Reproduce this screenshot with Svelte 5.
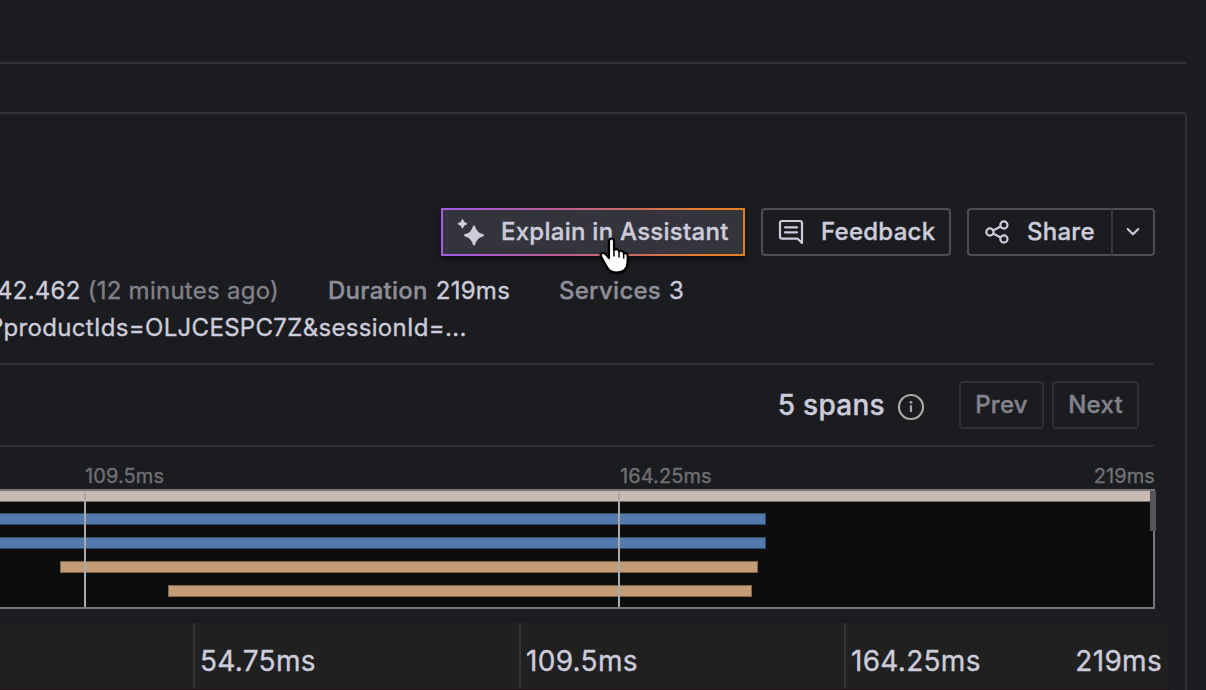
<script>
  const bars = [
    { left: 0, width: 1150, kind: 'root' },
    { left: 0, width: 766, kind: 'blue' },
    { left: 0, width: 765.5, kind: 'blue' },
    { left: 60, width: 698, kind: 'tan' },
    { left: 168, width: 584, kind: 'tan' }
  ];
</script>

<div class="page">
  <header></header>
  <main>
    <div class="actions">
      <button class="btn explain">
        <svg width="28" height="28" viewBox="0 0 28 28" fill="currentColor">
          <path d="M6.5 1Q6.9 1 7.1 1.6Q7.8 4.4 10.6 5.1Q11.2 5.3 11.2 5.8T10.6 6.5Q7.8 7.3 7.1 10Q6.9 10.6 6.5 10.6T5.9 10Q5.2 7.3 2.4 6.5Q1.8 6.3 1.8 5.8T2.4 5.1Q5.2 4.4 5.9 1.6Q6.1 1 6.5 1Z" />
          <path d="M18 7.5Q18.9 7.5 19.2 8.4Q20.8 14.6 26.9 16.1Q27.9 16.4 27.9 17.3T26.9 18.4Q20.8 20 19.2 26.4Q18.9 27.4 18 27.4T16.8 26.4Q15.2 20 9.1 18.4Q8.1 18.1 8.1 17.3T9.1 16.1Q15.2 14.6 16.8 8.4Q17.1 7.5 18 7.5Z" />
        </svg>
        <span>Explain in Assistant</span>
        <svg class="pointer" width="34" height="42" viewBox="0 0 34 42">
          <path d="M13 24V7.5C13 3.5 18 3.5 18 7.5V16C19.5 14.5 22.5 15 23 17.2C25 16.2 27.5 17 27.9 19.2C30 18.7 31.7 20 31.7 22.3V27C31.7 34 28 38.5 20.5 38.5C14.5 38.5 12.3 36 9.7 31L5.2 22.8C3.4 19.3 7.4 17.5 9.6 20.3Z" fill="#fff" stroke="#000" stroke-width="2.2" stroke-linejoin="round" />
          <path d="M18 15V22M23 17V23M27.7 19V24" stroke="#000" stroke-width="1.5" stroke-linecap="round" />
        </svg>
      </button>
      <button class="btn">
        <svg width="28" height="28" viewBox="0 0 28 28" fill="none" stroke="currentColor" stroke-width="2.2" stroke-linecap="round" stroke-linejoin="round">
          <path d="M25 25L20.7 20.7H5.2Q3 20.7 3 18.5V5.2Q3 3 5.2 3H22.8Q25 3 25 5.2Z" />
          <path d="M8 9.3H20M8 14.3H20" />
        </svg>
        <span>Feedback</span>
      </button>
      <div class="split">
        <button class="btn">
          <svg width="28" height="28" viewBox="0 0 28 28" fill="none" stroke="currentColor" stroke-width="2.2">
            <circle cx="6.9" cy="14" r="3.6" /><circle cx="20.9" cy="7" r="3.6" /><circle cx="20.9" cy="21" r="3.6" />
            <path d="M10.1 12.4L17.7 8.6M10.1 15.6L17.7 19.4" />
          </svg>
          <span>Share</span>
        </button>
        <button class="btn arrow">
          <svg width="16" height="10" viewBox="0 0 16 10" fill="none" stroke="currentColor" stroke-width="2.1" stroke-linecap="round" stroke-linejoin="round"><path d="M2.7 2L8 7.3L13.3 2" /></svg>
        </button>
      </div>
    </div>

    <div class="meta">
      <span class="time">42.462 <i>(12 minutes ago)</i></span>
      <span class="dur"><b>Duration</b> 219ms</span>
      <span class="svc"><b>Services</b> 3</span>
    </div>
    <div class="url">?productIds=OLJCESPC7Z&amp;sessionId=...</div>

    <section class="find">
      <span class="count">5 spans</span>
      <svg class="info" width="28" height="28" viewBox="0 0 28 28" fill="none" stroke="#a9a9a6" stroke-width="2.2">
        <circle cx="14" cy="14" r="12" />
        <path d="M14 13V18.2" stroke-linecap="round" />
        <circle cx="14" cy="9.3" r="1.4" fill="#a9a9a6" stroke="none" />
      </svg>
      <button class="btn off prev">Prev</button>
      <button class="btn off next">Next</button>
    </section>

    <div class="ticks"><span>109.5ms</span><span>164.25ms</span><span>219ms</span></div>
    <div class="map">
      {#each bars as bar}
        <div class="bar {bar.kind}" class:open={bar.left === 0} style="margin-left:{bar.left}px;width:{bar.width}px"></div>
      {/each}
      <div class="line first"></div>
      <div class="line second"></div>
      <div class="handle"></div>
    </div>

    <div class="ruler">
      <div></div>
      <div>54.75ms</div>
      <div>109.5ms</div>
      <div><span>164.25ms</span><span>219ms</span></div>
    </div>
  </main>
</div>

<style>
  :global(body) { background: #1b1c20; }
  .page { width: 1206px; height: 690px; overflow: hidden; background: #1b1c20; color: #ccccdc; font: 400 24px/36px Inter, sans-serif; letter-spacing: 0.26px; white-space: nowrap; -webkit-text-stroke: 0.35px; }
  .page * { box-sizing: border-box; }
  header { width: 1187px; height: 64px; border-bottom: 2px solid #303135; }
  main { width: 1187px; height: 578px; margin-top: 48px; padding-top: 94px; border: solid #303135; border-width: 2px 2px 0 0; border-top-right-radius: 4px; overflow: hidden; }
  .actions { display: flex; justify-content: flex-end; gap: 16px; padding-right: 30px; }
  .btn { display: flex; align-items: center; height: 48px; margin: 0; padding: 0 0 0 14px; background: transparent; border: 2px solid #4d4e54; border-radius: 4px; color: #ccccdc; font: 500 24px/36px Inter, sans-serif; letter-spacing: 0.26px; width: 190px; -webkit-text-stroke: 0.35px; }
  .btn > svg { flex: none; }
  .btn > span { margin-left: 16px; }
  .btn.explain { position: relative; width: 304px; border-radius: 0; border-image: linear-gradient(90deg, #a259ee, #c4627d 50%, #e17f28 88%) 1; background: #34343c; box-shadow: 0 3px 6px #0008; }
  .btn.explain > svg:first-child { margin-left: -1px; margin-right: 1px; }
  .btn.explain .pointer { position: absolute; left: 153px; top: 24px; margin: 0; z-index: 2; filter: drop-shadow(0 1px 1px #0008); }
  .split { display: flex; }
  .split .btn { width: 144px; border-right: 0; border-radius: 4px 0 0 4px; }
  .split .btn.arrow { width: 44px; padding: 0 0 0 12px; border-right: 2px solid #4d4e54; border-left-color: #37383d; border-radius: 0 4px 4px 0; }
  .meta { display: flex; height: 36px; margin: 17px 0 0 -3px; }
  .meta b { font-weight: 500; color: #8e8e99; margin-right: 1px; }
  .meta i { font-style: normal; color: #818189; }
  .time { width: 331px; }
  .dur { width: 231px; }
  .url { margin: 0 0 0 -9px; height: 37px; padding-top: 1px; letter-spacing: 0.32px; }
  .find { display: flex; align-items: center; width: 1155px; height: 84px; margin-top: 17px; padding-right: 16px; border: solid #303135; border-width: 2px 0; border-radius: 0 4px 4px 0; justify-content: flex-end; }
  .count { font-size: 28px; font-weight: 500; letter-spacing: 0.3px; }
  .info { margin: 4px 34px 0 12px; }
  .btn.off { padding: 0; justify-content: center; color: #83838d; border-color: #303135; }
  .prev { width: 85px; margin-right: 8px; }
  .next { width: 87px; }
  .ticks { display: flex; width: 1155px; height: 24px; margin-top: 17px; margin-bottom: 1px; padding-left: 85px; font-size: 20px; line-height: 24px; color: #707074; letter-spacing: 0.1px; }
  .ticks span:first-child { width: 535px; }
  .ticks span:last-child { margin-left: auto; }
  .map { position: relative; width: 1155px; height: 120px; background: #0d0d0d; border: solid #77777a; border-width: 2px 2px 2px 0; }
  .bar { height: 12px; margin-bottom: 12px; border: 1px solid; }
  .root { height: 11px; margin-bottom: 11px; background: #c9b9b2; border-color: #c9b9b2 #777 #77716e; border-width: 0 0 1px; }
  .blue { background: #5279a9; border-color: #304c65; }
  .tan { background: #c49b77; border-color: #80664e; }
  .open { border-left-width: 0; }
  .line { position: absolute; top: 0; width: 2px; height: 116px; background: #aaa; }
  .first { left: 84px; }
  .second { left: 618px; }
  .handle { position: absolute; right: -3px; top: 0; width: 6px; height: 40px; background: #555557; }
  .ruler { display: grid; grid-template-columns: 193px 326px 325px 1fr; width: 1169px; height: 66px; margin-top: 14px; background: #202020; font-size: 28px; line-height: 76px; letter-spacing: 0.3px; box-shadow: 0 1px #1c1217; }
  .ruler > div { padding: 0 7px 0 5px; border-left: 2px solid #353535; height: 66px; }
  .ruler > div:first-child { border: 0; }
  .ruler > div:last-child { display: flex; justify-content: space-between; }
</style>
